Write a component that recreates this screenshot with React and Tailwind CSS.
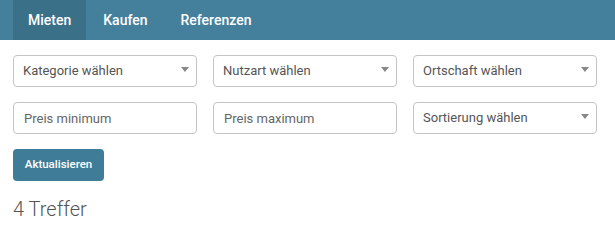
import React from "react";

const selects1 = ["Kategorie wählen", "Nutzart wählen", "Ortschaft wählen"];

function Select({ label }) {
  return (
    <div className="relative flex h-8 items-center rounded border border-[#c4c4c4] bg-white pl-[9px] text-[13px] text-[#555]">
      {label}
      <span className="absolute right-[7px] top-[11px] h-0 w-0 border-x-[4px] border-t-[5px] border-x-transparent border-t-[#888]" />
    </div>
  );
}

function Input({ placeholder }) {
  return (
    <input
      placeholder={placeholder}
      className="h-8 w-full rounded border border-[#c4c4c4] bg-white pl-[10px] text-[13px] text-[#555] placeholder:text-[#666] outline-none"
    />
  );
}

export default function App() {
  return (
    <div className="min-h-screen bg-white font-['Roboto',sans-serif]">
      <nav className="flex h-10 bg-[#447f9b] pl-[13px] text-[14px] font-medium text-white">
        <a className="flex items-center bg-[#3b7089] px-[15px]">Mieten</a>
        <a className="flex items-center px-[17px]">Kaufen</a>
        <a className="flex items-center px-[16px]">Referenzen</a>
      </nav>

      <div className="px-[13px] pt-[15px]">
        <div className="grid w-[584px] grid-cols-3 gap-x-4 gap-y-[15px]">
          {selects1.map((s) => (
            <Select key={s} label={s} />
          ))}
          <Input placeholder="Preis minimum" />
          <Input placeholder="Preis maximum" />
          <Select label="Sortierung wählen" />
        </div>

        <button className="mt-[15px] h-8 w-[91px] rounded bg-[#3e7c98] text-[11.5px] font-medium text-white">
          Aktualisieren
        </button>

        <h2 className="mt-[16px] text-[20px] font-light leading-6 text-[#555]">4 Treffer</h2>
      </div>
    </div>
  );
}
